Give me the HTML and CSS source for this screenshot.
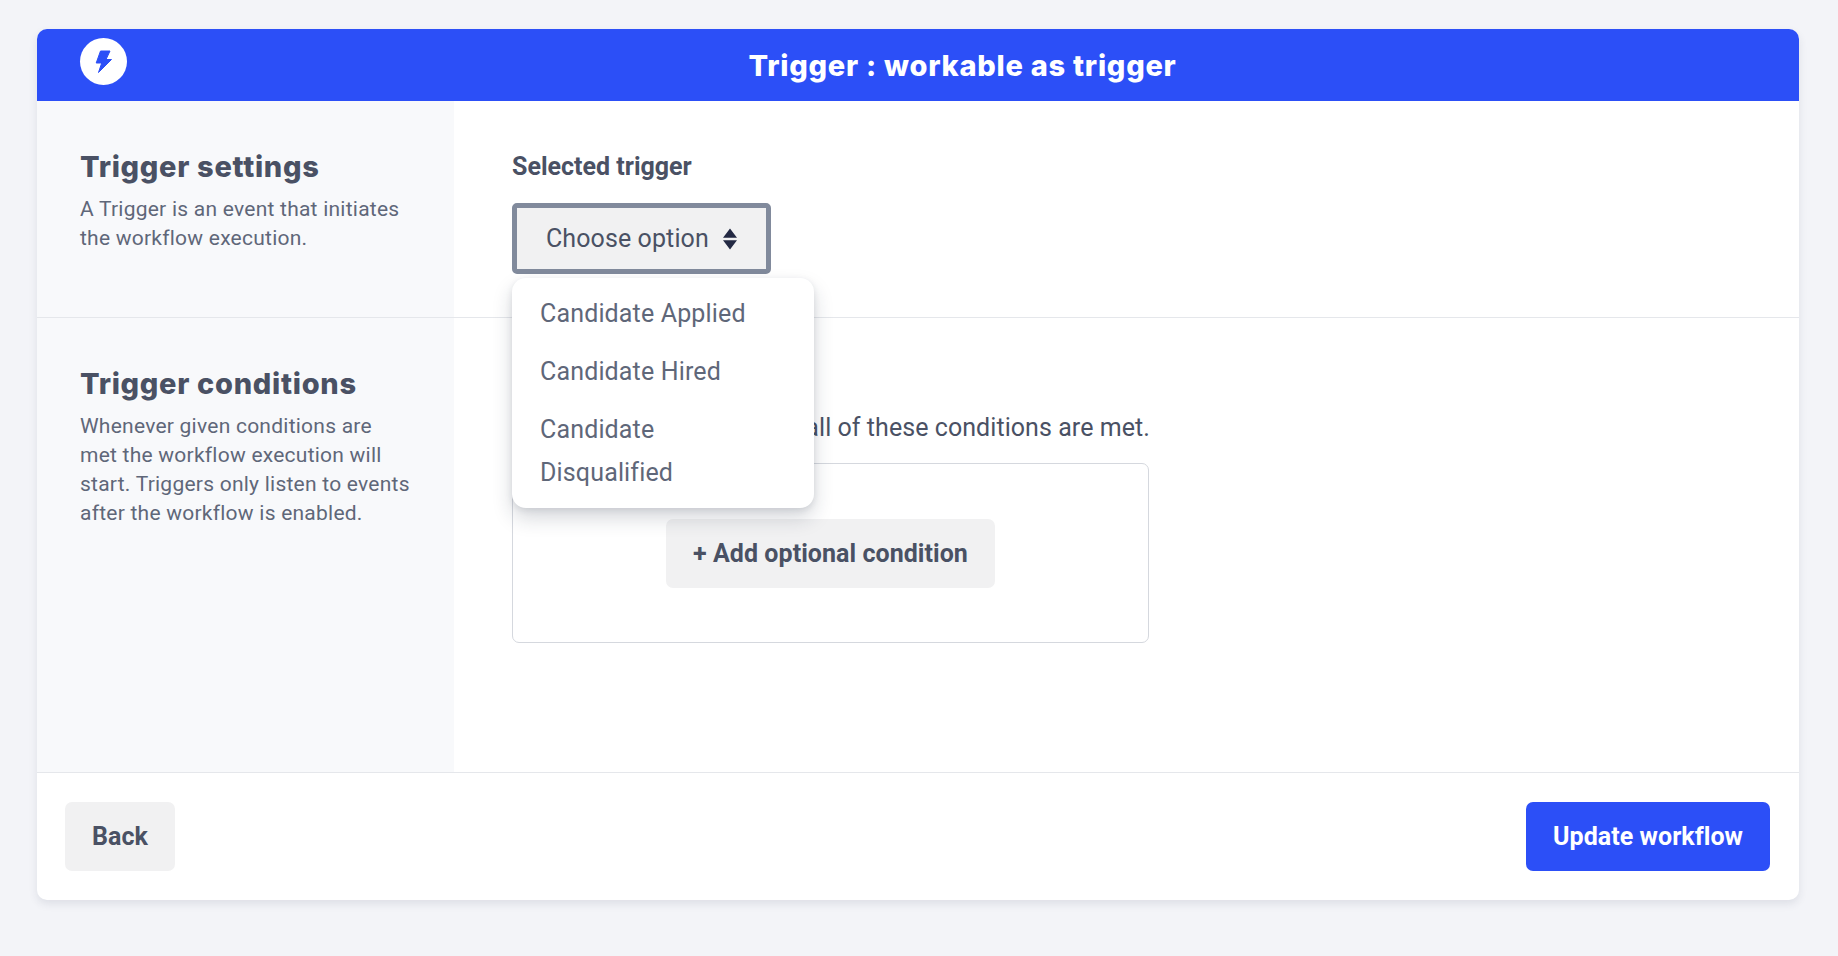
FILE: index.html
```html
<!DOCTYPE html>
<html lang="en">
<head>
<meta charset="utf-8">
<title>Trigger : workable as trigger</title>
<link rel="stylesheet" href="styles.css">
</head>
<body>
<main class="card">
  <header class="card-header">
    <span class="logo">
      <svg width="47" height="47" viewBox="0 0 47 47" aria-hidden="true"><path class="bolt" d="M20.500 13H30l-4 8.500h5.500L18.500 34.500l3.200-9.500H16.200z"/></svg>
    </span>
    <h1 class="card-title">Trigger : workable as trigger</h1>
  </header>
  <section class="row row-settings">
    <div class="side">
      <h2 class="side-title">Trigger settings</h2>
      <p class="side-text">A Trigger is an event that initiates the workflow execution.</p>
    </div>
    <div class="content">
      <div class="field-label">Selected trigger</div>
      <div class="select-wrap">
        <button class="select" type="button">
          <span>Choose option</span>
          <svg width="16" height="24" viewBox="0 0 16 24" aria-hidden="true"><path class="caret" d="M8 1.500l7 9.300H1zM8 22.500l-7-9.300h14z"/></svg>
        </button>
        <ul class="menu">
          <li class="menu-item">Candidate Applied</li>
          <li class="menu-item">Candidate Hired</li>
          <li class="menu-item">Candidate Disqualified</li>
        </ul>
      </div>
    </div>
  </section>
  <section class="row row-conditions">
    <div class="side">
      <h2 class="side-title">Trigger conditions</h2>
      <p class="side-text">Whenever given conditions are met the workflow execution will start. Triggers only listen to events after the workflow is enabled.</p>
    </div>
    <div class="content">
      <div class="field-label">Conditions</div>
      <p class="cond-text">Begin the workflow only if all of these conditions are met.</p>
      <div class="cond-box">
        <button class="btn btn-grey" type="button">+ Add optional condition</button>
      </div>
    </div>
  </section>
  <footer class="card-footer">
    <button class="btn btn-grey btn-back" type="button">Back</button>
    <button class="btn btn-primary" type="button">Update workflow</button>
  </footer>
</main>
</body>
</html>
```
FILE: styles.css
```css
* { box-sizing: border-box; }
html, body { height: 100%; }
body {
  margin: 0;
  padding: 29px 39px 56px 37px;
  background: #f3f4f8;
  font-family: Roboto, "Liberation Sans", sans-serif;
  color: #4a5164;
}
.card {
  height: 871px;
  display: flex;
  flex-direction: column;
  background: #fff;
  border-radius: 10px;
  box-shadow: 0 4px 8px rgba(40, 50, 80, 0.1);
}
.card-header {
  height: 72px;
  flex: none;
  background: #2c4ff7;
  border-radius: 10px 10px 0 0;
  padding: 9px 43px 0;
  display: flex;
  align-items: flex-start;
}
.logo {
  width: 47px;
  height: 47px;
  border-radius: 50%;
  background: #fff;
  display: flex;
  flex: none;
}
.bolt {
  fill: #2c4ff7;
  stroke: #2c4ff7;
  stroke-width: 1;
  stroke-linejoin: round;
}
.card-title {
  flex: 1;
  margin: 10px 0 0;
  padding-left: 42px;
  text-align: center;
  color: #fff;
  font-family: Inter, sans-serif;
  font-size: 29px;
  line-height: 36px;
  font-weight: 800;
  letter-spacing: 0.75px;
}
.row { display: flex; }
.row-settings { height: 217px; flex: none; border-bottom: 1px solid #e5e7eb; }
.row-conditions { flex: 1; min-height: 0; }
.side {
  width: 417px;
  flex: none;
  background: #f8f9fb;
  padding: 48px 43px 0 43px;
}
.side-title {
  margin: 0;
  font-family: Inter, sans-serif;
  font-size: 29px;
  line-height: 36px;
  font-weight: 800;
  letter-spacing: 0.7px;
  color: #4a5164;
}
.side-text {
  margin: 10px 0 0;
  font-size: 21px;
  line-height: 29px;
  letter-spacing: 0.24px;
  color: #5f6779;
}
.content { flex: 1; padding: 50px 0 0 58px; }
.field-label {
  font-size: 25px;
  line-height: 32px;
  font-weight: 700;
  color: #4a5164;
}
.select-wrap { position: relative; margin-top: 20px; width: 259px; }
.select {
  width: 259px;
  height: 71px;
  display: flex;
  align-items: center;
  justify-content: space-between;
  padding: 0 28px 0 29px;
  background: #f1f1f2;
  border: 5px solid #818a9c;
  border-radius: 5px;
  font-family: inherit;
  font-size: 25px;
  letter-spacing: 0.1px;
  color: #4a5164;
}
.caret { fill: #232943; }
.menu {
  position: absolute;
  z-index: 2;
  top: 75px;
  left: 0;
  width: 302px;
  margin: 0;
  padding: 14px 0 0;
  list-style: none;
  background: #fff;
  border-radius: 14px;
  box-shadow: 0 10px 20px rgba(30, 40, 60, 0.18), 0 2px 6px rgba(30, 40, 60, 0.1);
}
.menu-item {
  padding: 0 28px;
  margin-bottom: 15px;
  font-size: 25px;
  line-height: 43px;
  letter-spacing: 0.15px;
  color: #5f6779;
  width: 280px;
}
.menu-item:last-child { margin-bottom: 14px; }
.cond-text {
  margin: 11px 0 0;
  font-size: 25px;
  line-height: 34px;
  letter-spacing: 0.06px;
  color: #4a5164;
}
.cond-box {
  width: 637px;
  height: 180px;
  margin-top: 18px;
  padding-top: 55px;
  border: 1px solid #d5d8de;
  border-radius: 7px;
  display: flex;
  justify-content: center;
  align-items: flex-start;
}
.btn {
  height: 69px;
  border: 0;
  border-radius: 7px;
  font-family: inherit;
  font-size: 25px;
  font-weight: 700;
  letter-spacing: 0.05px;
  padding: 0 27px;
}
.btn-grey { background: #f1f1f2; color: #4a5164; }
.btn-primary { background: #2c4ff7; color: #fff; }
.card-footer {
  height: 128px;
  flex: none;
  border-top: 1px solid #e5e7eb;
  padding: 29px 29px 0 28px;
  display: flex;
  justify-content: space-between;
  align-items: flex-start;
}
```
